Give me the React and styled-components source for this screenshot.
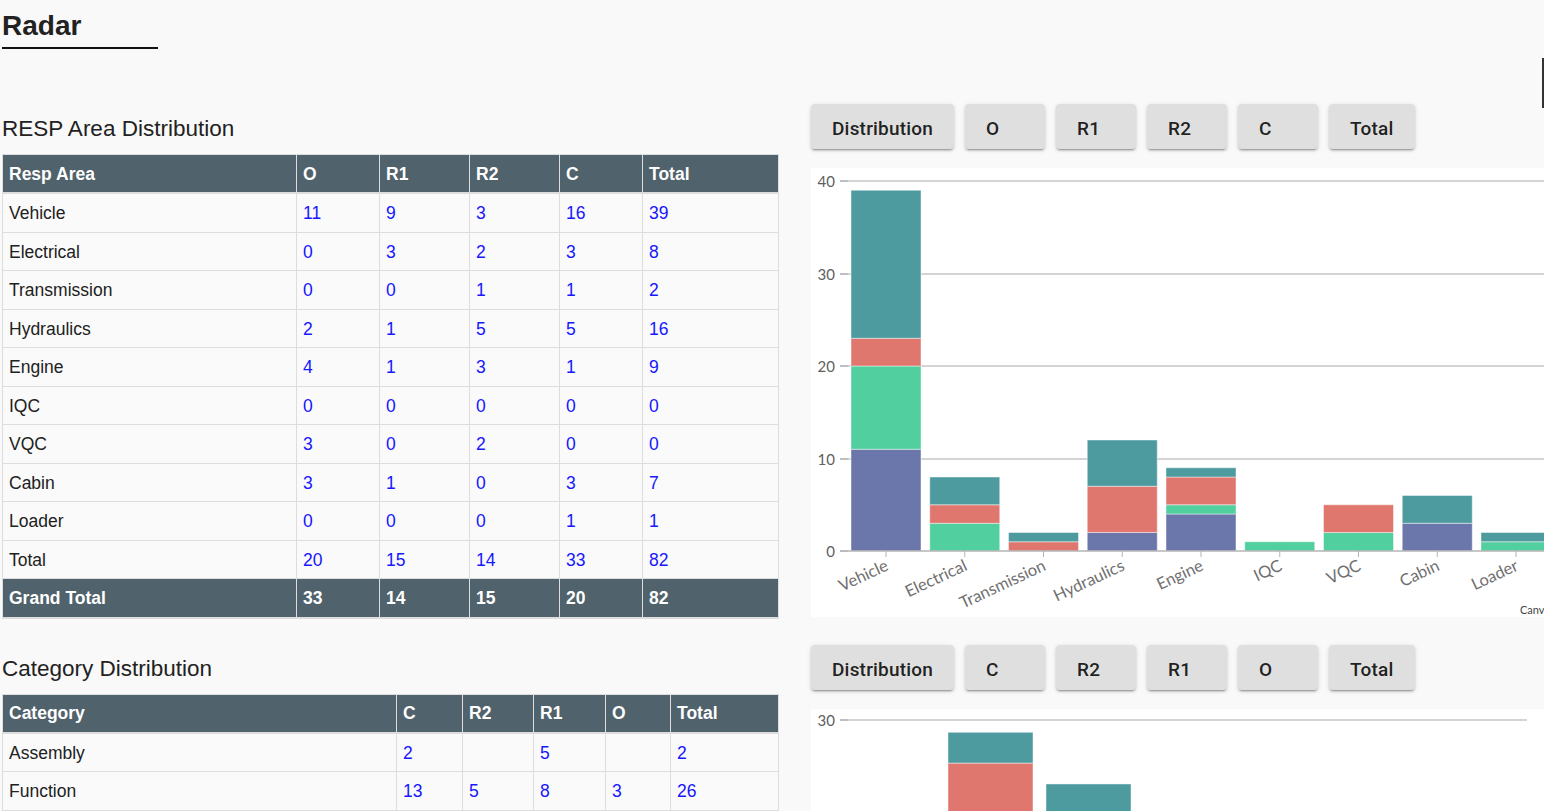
import React from "react";
import styled, { createGlobalStyle } from "styled-components";

const GlobalStyle = createGlobalStyle`
  html, body {
    margin: 0;
    padding: 0;
    background: #f9f9f9;
    overflow: hidden;
  }
  body {
    font-family: "Liberation Sans", Arial, sans-serif;
    color: #212121;
  }
`;

const Page = styled.div`
  position: relative;
  padding: 0 2px;
`;

const TitleWrap = styled.div`
  width: 156px;
  padding-top: 10px;
  padding-bottom: 5px;
  border-bottom: 2px solid #111;
`;

const Title = styled.h1`
  margin: 0;
  font-size: 28px;
  line-height: 32px;
  font-weight: 700;
  color: #222;
`;

const EdgeMark = styled.div`
  position: absolute;
  left: 1542px;
  top: 58px;
  width: 2px;
  height: 50px;
  background: #333;
`;

const Main = styled.div`
  display: flex;
  align-items: flex-start;
  gap: 32px;
  margin-top: 55px;
`;

const LeftColumn = styled.div`
  flex: none;
  width: 777px;
  padding-top: 12px;
`;

const RightColumn = styled.div`
  flex: none;
  display: flex;
  flex-direction: column;
`;

const SectionHeading = styled.h2`
  margin: ${(p) => (p.$first ? "0" : "37px")} 0 13px 0;
  font-size: 22.5px;
  line-height: 25px;
  font-weight: 400;
  color: #222;
`;

const Table = styled.table`
  width: 777px;
  table-layout: fixed;
  border-collapse: separate;
  border-spacing: 0;
  border-top: 1px solid #ddd;
  border-left: 1px solid #ddd;
  font-size: 17.5px;
`;

const HeadCell = styled.th`
  background: #50626b;
  color: #fff;
  font-weight: 700;
  text-align: left;
  padding: 8.5px 6px 7.5px;
  line-height: 21px;
  border-right: 1px solid #ddd;
  border-bottom: 2px solid #ddd;
  white-space: nowrap;
`;

const Cell = styled.td`
  background: #fafafa;
  color: ${(p) => (p.$num ? "#1616ff" : "#212121")};
  padding: 9px 6px 7.5px;
  line-height: 21px;
  border-right: 1px solid #ddd;
  border-bottom: 1px solid #ddd;
  white-space: nowrap;
`;

const TotalCell = styled.td`
  background: #50626b;
  color: #fff;
  font-weight: 700;
  padding: 9px 6px 7.5px;
  line-height: 21px;
  border-right: 1px solid #ddd;
  border-bottom: 2px solid #ddd;
  white-space: nowrap;
`;

const ButtonRow = styled.div`
  display: flex;
  gap: 11px;
  margin-top: ${(p) => (p.$first ? "0" : "28px")};
`;

const ChartButton = styled.button`
  height: 45px;
  min-width: 80px;
  padding: 3px 21px 0;
  display: flex;
  align-items: center;
  justify-content: flex-start;
  border: none;
  border-radius: 4px;
  background: #dfdfdf;
  color: rgba(0, 0, 0, 0.87);
  font-family: Roboto, "Liberation Sans", sans-serif;
  font-weight: 500;
  font-size: 19px;
  letter-spacing: 0.2px;
  box-shadow: 0px 3px 1px -2px rgba(0, 0, 0, 0.2),
    0px 2px 2px 0px rgba(0, 0, 0, 0.14), 0px 1px 5px 0px rgba(0, 0, 0, 0.12);
  cursor: pointer;
`;

const ChartBox = styled.div`
  margin-top: 19px;
  width: 790px;
  height: 449px;
  background: #fff;
`;

const COLORS = ["#6b77ab", "#52cf9e", "#e0776e", "#4e9b9f"];

const respRows = [
  ["Vehicle", 11, 9, 3, 16, 39],
  ["Electrical", 0, 3, 2, 3, 8],
  ["Transmission", 0, 0, 1, 1, 2],
  ["Hydraulics", 2, 1, 5, 5, 16],
  ["Engine", 4, 1, 3, 1, 9],
  ["IQC", 0, 0, 0, 0, 0],
  ["VQC", 3, 0, 2, 0, 0],
  ["Cabin", 3, 1, 0, 3, 7],
  ["Loader", 0, 0, 0, 1, 1],
  ["Total", 20, 15, 14, 33, 82],
];

const catRows = [
  ["Assembly", 2, "", 5, "", 2],
  ["Function", 13, 5, 8, 3, 26],
];

const chart1 = {
  zeroY: 383,
  unit: 9.25,
  ticks: [0, 10, 20, 30, 40],
  gridLeft: 29,
  gridRight: 790,
  firstCenter: 75,
  pitch: 78.75,
  barWidth: 70,
  credit: true,
  data: [
    ["Vehicle", [11, 9, 3, 16]],
    ["Electrical", [0, 3, 2, 3]],
    ["Transmission", [0, 0, 1, 1]],
    ["Hydraulics", [2, 0, 5, 5]],
    ["Engine", [4, 1, 3, 1]],
    ["IQC", [0, 1, 0, 0]],
    ["VQC", [0, 2, 3, 0]],
    ["Cabin", [3, 0, 0, 3]],
    ["Loader", [0, 1, 0, 1]],
  ],
};

const chart2 = {
  zeroY: 380,
  unit: 12.3,
  ticks: [0, 10, 20, 30],
  gridLeft: 29,
  gridRight: 716,
  firstCenter: 81.5,
  pitch: 98,
  barWidth: 85,
  credit: false,
  data: [
    ["Assembly", [0, 5, 0, 2]],
    ["Function", [3, 8, 15.5, 2.5]],
    ["Dimension", [2, 5, 5, 12.8]],
    ["Appearance", [1, 2, 3, 4]],
    ["Leak", [0, 3, 2, 1]],
    ["Paint", [1, 1, 2, 2]],
    ["Other", [0, 1, 1, 1]],
  ],
};

function StackedChart({ cfg }) {
  const { zeroY, unit, ticks, gridLeft, gridRight, firstCenter, pitch, barWidth, data } = cfg;
  return (
    <svg width="790" height="449" viewBox="0 0 790 449">
      {ticks.map((t) => {
        const y = Math.round(zeroY - t * unit);
        return (
          <g key={t}>
            {t !== 0 && (
              <line x1={gridLeft} x2={gridRight} y1={y} y2={y} stroke="#a9a9a9" strokeWidth="1" />
            )}
            <line x1={gridLeft} x2={gridLeft + 8} y1={y} y2={y} stroke="#a9a9a9" strokeWidth="1" />
            <text
              x="24"
              y={y}
              textAnchor="end"
              dominantBaseline="central"
              fontFamily="Lato, 'Open Sans', sans-serif"
              fontSize="15"
              fill="#606060"
            >
              {t}
            </text>
          </g>
        );
      })}
      {data.map(([label, vals], i) => {
        const cx = firstCenter + i * pitch;
        let acc = 0;
        return (
          <g key={label}>
            {vals.map((v, k) => {
              if (!v) return null;
              const yTop = zeroY - (acc + v) * unit;
              const h = v * unit;
              acc += v;
              return (
                <rect
                  key={k}
                  x={cx - barWidth / 2}
                  y={yTop}
                  width={barWidth}
                  height={h}
                  fill={COLORS[k]}
                  stroke="rgba(255,255,255,0.45)"
                  strokeWidth="1"
                />
              );
            })}
            <line x1={cx} x2={cx} y1={zeroY} y2={zeroY + 6} stroke="#b5b5b5" strokeWidth="1" />
            <text
              x={cx - 2}
              y={zeroY + 7}
              textAnchor="end"
              dominantBaseline="hanging"
              transform={`rotate(-25 ${cx - 2} ${zeroY + 7})`}
              fontFamily="Lato, 'Open Sans', sans-serif"
              fontSize="16.5"
              fill="#707070"
            >
              {label}
            </text>
          </g>
        );
      })}
      <line x1={gridLeft} x2={gridRight} y1={zeroY} y2={zeroY} stroke="#b5b5b5" strokeWidth="1.5" />
      {cfg.credit && (
        <text x="709" y="446" fontFamily="Lato, sans-serif" fontSize="11" fill="#444">
          CanvasJS.com
        </text>
      )}
    </svg>
  );
}

function DataTable({ head, widths, rows, grand }) {
  return (
    <Table>
      <colgroup>
        {widths.map((w, i) => (
          <col key={i} style={{ width: w }} />
        ))}
      </colgroup>
      <thead>
        <tr>
          {head.map((h) => (
            <HeadCell key={h}>{h}</HeadCell>
          ))}
        </tr>
      </thead>
      <tbody>
        {rows.map((r) => (
          <tr key={r[0]}>
            {r.map((c, i) => (
              <Cell key={i} $num={i > 0}>
                {c}
              </Cell>
            ))}
          </tr>
        ))}
        {grand && (
          <tr>
            {grand.map((c, i) => (
              <TotalCell key={i}>{c}</TotalCell>
            ))}
          </tr>
        )}
      </tbody>
    </Table>
  );
}

function Buttons({ labels, first }) {
  return (
    <ButtonRow $first={first}>
      {labels.map((l) => (
        <ChartButton key={l}>{l}</ChartButton>
      ))}
    </ButtonRow>
  );
}

export default function App() {
  return (
    <Page>
      <GlobalStyle />
      <TitleWrap>
        <Title>Radar</Title>
      </TitleWrap>
      <EdgeMark />
      <Main>
        <LeftColumn>
          <SectionHeading $first>RESP Area Distribution</SectionHeading>
          <DataTable
            head={["Resp Area", "O", "R1", "R2", "C", "Total"]}
            widths={[294, 83, 90, 90, 83, 136]}
            rows={respRows}
            grand={["Grand Total", 33, 14, 15, 20, 82]}
          />
          <SectionHeading>Category Distribution</SectionHeading>
          <DataTable
            head={["Category", "C", "R2", "R1", "O", "Total"]}
            widths={[394, 66, 71, 72, 65, 108]}
            rows={catRows}
          />
        </LeftColumn>
        <RightColumn>
          <Buttons first labels={["Distribution", "O", "R1", "R2", "C", "Total"]} />
          <ChartBox>
            <StackedChart cfg={chart1} />
          </ChartBox>
          <Buttons labels={["Distribution", "C", "R2", "R1", "O", "Total"]} />
          <ChartBox>
            <StackedChart cfg={chart2} />
          </ChartBox>
        </RightColumn>
      </Main>
    </Page>
  );
}
